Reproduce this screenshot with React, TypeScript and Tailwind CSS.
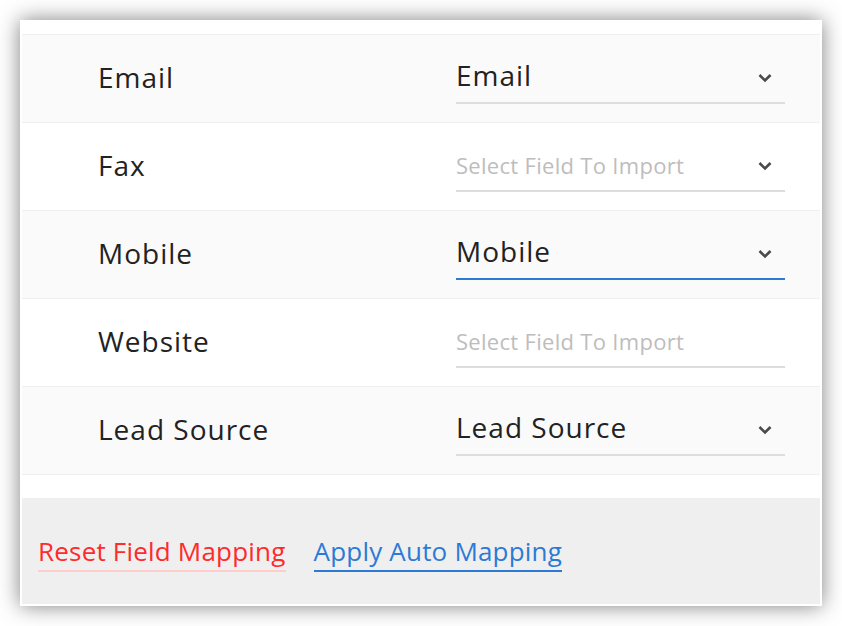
import React from 'react';

type Row = {
  label: string;
  value?: string;
  focused?: boolean;
  chevron?: boolean;
};

const rows: Row[] = [
  { label: 'Email', value: 'Email', chevron: true },
  { label: 'Fax', chevron: true },
  { label: 'Mobile', value: 'Mobile', focused: true, chevron: true },
  { label: 'Website', chevron: false },
  { label: 'Lead Source', value: 'Lead Source', chevron: true },
];

const Chevron = () => (
  <svg width="16" height="10" viewBox="0 0 16 10" className="shrink-0">
    <path d="M2.5 2 L8 7.5 L13.5 2" fill="none" stroke="#4a4a4a" strokeWidth="2.6" />
  </svg>
);

const MappingRow = ({ row, index }: { row: Row; index: number }) => (
  <div
    className={`flex h-[88px] items-center border-b border-[#f0f0f0] pl-[76px] ${
      index % 2 === 0 ? 'bg-[#fafafa]' : 'bg-white'
    }`}
  >
    <div className="w-[358px] pb-[4px] text-[28px] tracking-[1px] text-[#222]">{row.label}</div>
    <div
      className={`flex h-[50px] w-[329px] items-center justify-between border-b-2 pr-[12px] ${
        row.focused ? 'border-[#2d7bd5]' : 'border-[#dddddd]'
      }`}
    >
      {row.value ? (
        <span className="pb-[6px] text-[28px] tracking-[1px] text-[#222]">{row.value}</span>
      ) : (
        <span className="text-[22px] tracking-[0.3px] text-[#bdbdbd]">Select Field To Import</span>
      )}
      {row.chevron && <Chevron />}
    </div>
  </div>
);

export default function App() {
  return (
    <div className="min-h-[626px] bg-white p-5" style={{ fontFamily: '"Open Sans", Lato, sans-serif' }}>
      <div className="w-[802px] bg-white p-[2px] pt-[14px] shadow-[0_0_20px_rgba(0,0,0,0.5)]">
        <div className="border-t border-[#f0f0f0]">
          {rows.map((row, i) => (
            <MappingRow key={row.label} row={row} index={i} />
          ))}
        </div>
        <div className="h-[23px]" />
        <div className="flex h-[106px] items-center gap-[28px] bg-[#efefef] pl-[16px]">
          <a className="mt-[4px] border-b-2 border-[#ffcccc] pb-[3px] text-[26px] leading-[32px] tracking-[0.2px] text-[#ff2b2b]">
            Reset Field Mapping
          </a>
          <a className="mt-[4px] border-b-2 border-[#2b7bd6] pb-[3px] text-[26px] leading-[32px] tracking-[0.2px] text-[#2b7bd6]">
            Apply Auto Mapping
          </a>
        </div>
      </div>
    </div>
  );
}
